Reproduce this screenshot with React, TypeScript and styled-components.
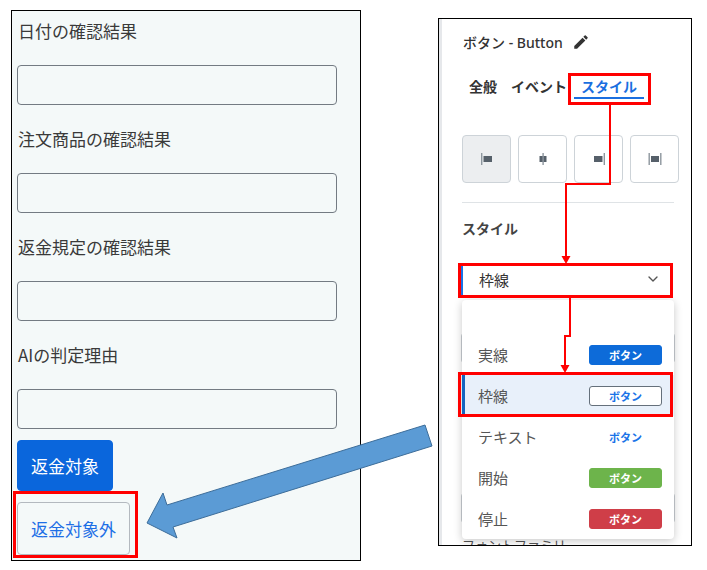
import React from "react";
import styled, { createGlobalStyle, css } from "styled-components";
import { MdEdit } from "react-icons/md";
import { ChevronDown } from "lucide-react";

const GlobalStyle = createGlobalStyle`
  html, body {
    margin: 0;
    padding: 0;
    background: #fff;
  }
  body {
    font-family: "Noto Sans CJK JP", "Noto Sans", sans-serif;
  }
`;

const Page = styled.div`
  position: relative;
  width: 707px;
  height: 570px;
  display: flex;
  align-items: flex-start;
  padding: 10px 0 0 11px;
  box-sizing: border-box;
  overflow: hidden;
`;

/* ---------- left: form preview ---------- */

const FormPanel = styled.div`
  width: 350px;
  height: 551px;
  box-sizing: border-box;
  border: 1px solid #000;
  background: #f4f9f9;
  padding: 7px 0 0 5px;
  display: flex;
  flex-direction: column;
`;

const Field = styled.div`
  display: flex;
  flex-direction: column;
  & + & {
    margin-top: 21px;
  }
`;

const FieldLabel = styled.label`
  font: 400 17px/26px "Noto Sans CJK JP", sans-serif;
  color: #3a3a3a;
  padding-left: 1px;
  margin-bottom: 21px;
`;

const TextBox = styled.div`
  width: 320px;
  height: 40px;
  box-sizing: border-box;
  border: 1px solid #737b83;
  border-radius: 4px;
  background: #f4f9f9;
`;

const ActionButton = styled.button<{ $variant: "primary" | "outline" }>`
  display: inline-flex;
  align-items: center;
  align-self: flex-start;
  box-sizing: border-box;
  padding: 0 13px;
  margin-top: 11px;
  border-radius: 4px;
  font: 400 17px/1 "Noto Sans CJK JP", sans-serif;
  cursor: pointer;
  ${(p) =>
    p.$variant === "primary"
      ? css`
          height: 51px;
          background: #0a66dc;
          border: 1px solid #0a66dc;
          color: #fff;
        `
      : css`
          height: 53px;
          background: transparent;
          border: 1px solid #b3b9bf;
          color: #1d6fe6;
        `}
`;

/* ---------- right: property sidebar ---------- */

const SidePanel = styled.div`
  margin: 8px 0 0 77px;
  width: 254px;
  height: 528px;
  box-sizing: border-box;
  border: 1px solid #000;
  background: #fff;
  overflow: hidden;
`;

const SideInner = styled.div`
  height: 100%;
  box-sizing: border-box;
  border-left: 3px solid #e6e8eb;
  padding: 13px 17px 0 20px;
  display: flex;
  flex-direction: column;
  font-family: "Noto Sans", "Noto Sans CJK JP", sans-serif;
`;

const TitleRow = styled.div`
  display: flex;
  align-items: center;
  gap: 9px;
  height: 20px;
  font-size: 14px;
  font-weight: 500;
  color: #333;
  padding-left: 1px;
`;

const TabRow = styled.div`
  display: flex;
  margin-top: 24px;
`;

const Tab = styled.div<{ $active?: boolean }>`
  padding: 1px 7px 0;
  font-size: 14px;
  line-height: 20px;
  font-weight: 700;
  color: ${(p) => (p.$active ? "#1a6fe0" : "#333")};
  border-bottom: 2px solid ${(p) => (p.$active ? "#1a6fe0" : "transparent")};
`;

const AlignGroup = styled.div`
  display: flex;
  gap: 7px;
  margin-top: 36px;
`;

const AlignButton = styled.div<{ $active?: boolean }>`
  flex: none;
  width: 49px;
  height: 48px;
  box-sizing: border-box;
  border: 1px solid #cdd3d8;
  border-radius: 4px;
  background: ${(p) => (p.$active ? "#eceef0" : "#fff")};
  display: flex;
  align-items: center;
  justify-content: center;
`;

const Divider = styled.hr`
  margin: 19px 0 0;
  border: none;
  border-top: 1px solid #dfe3e6;
`;

const SectionLabel = styled.div`
  margin-top: 16px;
  font-size: 14px;
  line-height: 20px;
  font-weight: 700;
  color: #444;
`;

const SelectWrap = styled.div`
  position: relative;
  margin-top: 27px;
`;

const SelectBox = styled.div`
  height: 30px;
  margin-left: -1px;
  width: 210px;
  box-sizing: border-box;
  border-left: 2px solid #1a73e8;
  padding: 0 10px 4px 16px;
  display: flex;
  align-items: center;
  justify-content: space-between;
  font-size: 15px;
  color: #333;
  background: #fff;
`;

const Menu = styled.div`
  position: absolute;
  top: calc(100% + 4px);
  left: 0;
  width: 212px;
  padding-top: 34px;
  background: #fff;
  border-radius: 4px;
  box-shadow: 0 2px 8px rgba(0, 0, 0, 0.22);
  z-index: 2;
`;

const MenuItem = styled.div<{ $selected?: boolean }>`
  height: 41px;
  box-sizing: border-box;
  display: flex;
  align-items: center;
  justify-content: space-between;
  padding: 0 12px 0 16px;
  font-size: 15px;
  color: #555;
  ${(p) =>
    p.$selected &&
    css`
      background: #e8f0fa;
      box-shadow: inset 3px 0 0 #1565c0;
    `}
`;

type BadgeKind = "solid" | "outline" | "text" | "start" | "stop";

const badgeColors: Record<BadgeKind, string> = {
  solid: "background:#0d6bd9;color:#fff;border-color:#0d6bd9;",
  outline: "background:#fff;color:#1a73e8;border-color:#65707b;",
  text: "background:transparent;color:#1a73e8;border-color:transparent;",
  start: "background:#6db44b;color:#fff;border-color:#6db44b;",
  stop: "background:#cf3e48;color:#fff;border-color:#cf3e48;",
};

const Badge = styled.span<{ $kind: BadgeKind }>`
  width: 73px;
  height: 20px;
  box-sizing: border-box;
  border: 1px solid;
  border-radius: 3px;
  display: flex;
  align-items: center;
  justify-content: center;
  font-size: 11px;
  font-weight: 700;
  ${(p) => badgeColors[p.$kind]}
`;

const UnderInput = styled.div<{ $gap: number }>`
  flex: none;
  margin-top: ${(p) => p.$gap}px;
  margin-left: -1px;
  width: 214px;
  height: 30px;
  box-sizing: border-box;
  border: 1px solid #c9ced3;
  border-radius: 3px;
`;

const UnderLabel = styled.div`
  flex: none;
  margin-top: 15px;
  font-size: 13px;
  line-height: 14px;
  color: #555;
`;

/* ---------- annotation layer ---------- */

const Annotations = styled.svg`
  position: absolute;
  left: 0;
  top: 0;
  width: 707px;
  height: 570px;
  pointer-events: none;
  z-index: 5;
`;

function AlignIcon({ kind }: { kind: "left" | "center" | "right" | "justify" }) {
  const bar = "#8d969e";
  const block = "#56606a";
  return (
    <svg width="14" height="12" viewBox="0 0 14 12">
      {kind === "left" && (
        <>
          <rect x="1" y="0" width="1.4" height="12" fill={bar} />
          <rect x="3.5" y="3" width="8.5" height="6" fill={block} />
        </>
      )}
      {kind === "center" && (
        <>
          <rect x="3.5" y="3" width="7" height="6" fill={block} />
          <rect x="6.4" y="0" width="1.4" height="12" fill={bar} />
        </>
      )}
      {kind === "right" && (
        <>
          <rect x="2" y="3" width="8.5" height="6" fill={block} />
          <rect x="11.6" y="0" width="1.4" height="12" fill={bar} />
        </>
      )}
      {kind === "justify" && (
        <>
          <rect x="0.5" y="0" width="1.4" height="12" fill={bar} />
          <rect x="3" y="3" width="8" height="6" fill={block} />
          <rect x="12.1" y="0" width="1.4" height="12" fill={bar} />
        </>
      )}
    </svg>
  );
}

const fields = ["日付の確認結果", "注文商品の確認結果", "返金規定の確認結果", "AIの判定理由"];

const menuItems: { label: string; kind: BadgeKind; selected?: boolean }[] = [
  { label: "実線", kind: "solid" },
  { label: "枠線", kind: "outline", selected: true },
  { label: "テキスト", kind: "text" },
  { label: "開始", kind: "start" },
  { label: "停止", kind: "stop" },
];

export default function App() {
  return (
    <>
      <GlobalStyle />
      <Page>
        <FormPanel>
          {fields.map((f) => (
            <Field key={f}>
              <FieldLabel>{f}</FieldLabel>
              <TextBox />
            </Field>
          ))}
          <ActionButton $variant="primary">返金対象</ActionButton>
          <ActionButton $variant="outline">返金対象外</ActionButton>
        </FormPanel>

        <SidePanel>
          <SideInner>
            <TitleRow>
              <span>ボタン - Button</span>
              <MdEdit size={18} color="#333" />
            </TitleRow>
            <TabRow>
              <Tab>全般</Tab>
              <Tab>イベント</Tab>
              <Tab $active>スタイル</Tab>
            </TabRow>
            <AlignGroup>
              <AlignButton $active>
                <AlignIcon kind="left" />
              </AlignButton>
              <AlignButton>
                <AlignIcon kind="center" />
              </AlignButton>
              <AlignButton>
                <AlignIcon kind="right" />
              </AlignButton>
              <AlignButton>
                <AlignIcon kind="justify" />
              </AlignButton>
            </AlignGroup>
            <Divider />
            <SectionLabel>スタイル</SectionLabel>
            <SelectWrap>
              <SelectBox>
                <span>枠線</span>
                <ChevronDown size={16} color="#555" strokeWidth={2} />
              </SelectBox>
              <Menu>
                {menuItems.map((m) => (
                  <MenuItem key={m.label} $selected={m.selected}>
                    <span>{m.label}</span>
                    <Badge $kind={m.kind}>ボタン</Badge>
                  </MenuItem>
                ))}
              </Menu>
            </SelectWrap>
            <UnderInput $gap={37} />
            <UnderInput $gap={130} />
            <UnderLabel>フォントファミリ</UnderLabel>
          </SideInner>
        </SidePanel>

        <Annotations viewBox="0 0 707 570">
          <g fill="none" stroke="#ff0000" strokeWidth="3">
            <rect x="569.5" y="74.5" width="80" height="29" />
            <rect x="459.5" y="264.5" width="212" height="32" />
            <rect x="459.5" y="373.5" width="212" height="42" />
            <rect x="14.5" y="492.5" width="122" height="64" />
          </g>
          <g fill="none" stroke="#ff0000" strokeWidth="2">
            <path d="M610 105 V184 H566 V257" />
            <path d="M570 298 V336 H565 V366" />
          </g>
          <g fill="#ff0000">
            <polygon points="561.5,256 570.5,256 566,264" />
            <polygon points="560.5,365 569.5,365 565,373" />
          </g>
          <polygon
            points="425,425 167,505 163,493 147,523 177,538 173,527 432,446"
            fill="#5b9bd5"
            stroke="#3d6d99"
            strokeWidth="1"
            strokeLinejoin="miter"
          />
        </Annotations>
      </Page>
    </>
  );
}
